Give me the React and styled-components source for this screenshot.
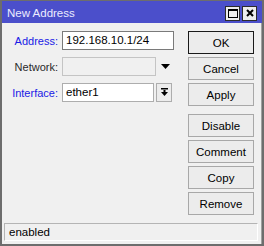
import React from 'react'
import styled, { createGlobalStyle } from 'styled-components'

const Global = createGlobalStyle`
  html, body {
    margin: 0;
    padding: 0;
    background: #f0f0f0;
  }
  * {
    box-sizing: border-box;
  }
`

const fields = [
  { label: 'Address:', value: '192.168.10.1/24', linked: true, kind: 'text' },
  { label: 'Network:', value: '', linked: false, kind: 'disabled' },
  { label: 'Interface:', value: 'ether1', linked: true, kind: 'select' },
]

const mainButtons = ['OK', 'Cancel', 'Apply']
const extraButtons = ['Disable', 'Comment', 'Copy', 'Remove']

const DropArrow = () => (
  <svg width="9" height="5" viewBox="0 0 9 5">
    <polygon points="0,0 9,0 4.5,5" fill="#000" />
  </svg>
)

const BarArrow = () => (
  <svg width="7" height="9" viewBox="0 0 7 9">
    <rect x="0" y="0" width="7" height="1.5" fill="#000" />
    <rect x="2.5" y="2" width="2" height="3" fill="#000" />
    <polygon points="0,4 7,4 3.5,8" fill="#000" />
  </svg>
)

export default function App() {
  return (
    <>
      <Global />
      <Window>
        <TitleBar>
          <Title>New Address</Title>
          <TitleButtons>
            <TitleButton>
              <MaxBox />
            </TitleButton>
            <TitleButton>
              <svg width="8" height="8" viewBox="0 0 8 8">
                <path d="M1 1 L7 7 M7 1 L1 7" stroke="#000" strokeWidth="2" />
              </svg>
            </TitleButton>
          </TitleButtons>
        </TitleBar>
        <Body>
          <Main>
            <Form>
              {fields.map(f => (
                <Row key={f.label}>
                  <Label linked={f.linked}>{f.label}</Label>
                  <Input kind={f.kind}>{f.value}</Input>
                  {f.kind === 'disabled' && (
                    <ArrowSlot>
                      <DropArrow />
                    </ArrowSlot>
                  )}
                  {f.kind === 'select' && (
                    <SelectButton>
                      <BarArrow />
                    </SelectButton>
                  )}
                </Row>
              ))}
            </Form>
            <Buttons>
              <Group>
                {mainButtons.map(b => (
                  <Button key={b} primary={b === 'OK'}>
                    {b}
                  </Button>
                ))}
              </Group>
              <Group>
                {extraButtons.map(b => (
                  <Button key={b}>{b}</Button>
                ))}
              </Group>
            </Buttons>
          </Main>
          <Status>enabled</Status>
        </Body>
      </Window>
    </>
  )
}

const Window = styled.div`
  width: 264px;
  height: 246px;
  display: flex;
  flex-direction: column;
  background: #6d6d6d;
  padding: 1px 2px 2px 2px;
  font-family: 'Liberation Sans', Arial, sans-serif;
  font-size: 11px;
`

const TitleBar = styled.div`
  height: 22px;
  flex: none;
  display: flex;
  align-items: center;
  justify-content: space-between;
  background: #4b4fcb;
  padding: 0 5px 0 5px;
`

const Title = styled.div`
  color: #ececff;
  font-size: 11.5px;
  margin-top: 1px;
`

const TitleButtons = styled.div`
  display: flex;
  gap: 2px;
  margin-top: 2px;
`

const TitleButton = styled.div`
  width: 15px;
  height: 15px;
  display: flex;
  align-items: center;
  justify-content: center;
  background: #ededed;
  border: 1px solid #2c2c2c;
`

const MaxBox = styled.div`
  width: 10px;
  height: 9px;
  border: 1px solid #000;
  border-top-width: 2px;
`

const Body = styled.div`
  flex: 1;
  display: flex;
  flex-direction: column;
  background: #f0f0f0;
  border-right: 1px solid #a0a0a0;
  padding: 8px 3px 3px 0;
`

const Main = styled.div`
  flex: 1;
  display: flex;
  justify-content: space-between;
  padding-right: 4px;
`

const Form = styled.div`
  display: flex;
  flex-direction: column;
  gap: 7px;
`

const Row = styled.div`
  display: flex;
  align-items: center;
  height: 19px;
`

const Label = styled.div`
  width: 56px;
  text-align: right;
  margin-right: 4px;
  color: ${p => (p.linked ? '#1a1ae6' : '#2a2a2a')};
`

const Input = styled.div`
  height: 19px;
  width: ${p => (p.kind === 'text' ? 112 : p.kind === 'disabled' ? 94 : 92)}px;
  padding: 2px 3px;
  line-height: 13px;
  color: #000;
  background: ${p => (p.kind === 'disabled' ? '#f0f0f0' : '#fff')};
  border: 1px solid ${p => (p.kind === 'text' ? '#7a7a7a' : p.kind === 'disabled' ? '#c4c4c4' : '#adadad')};
  font-size: 11.5px;
`

const ArrowSlot = styled.div`
  display: flex;
  margin-left: 5px;
`

const SelectButton = styled.div`
  width: 16px;
  height: 19px;
  margin-left: 2px;
  display: flex;
  align-items: center;
  justify-content: center;
  background: #ececec;
  border: 1px solid #adadad;
`

const Buttons = styled.div`
  display: flex;
  flex-direction: column;
  gap: 8px;
`

const Group = styled.div`
  display: flex;
  flex-direction: column;
  gap: 3px;
`

const Button = styled.div`
  width: 66px;
  height: 23px;
  display: flex;
  align-items: center;
  justify-content: center;
  background: #ececec;
  border: 1px solid ${p => (p.primary ? '#1a1a1a' : '#a8a8a8')};
  color: #000;
  font-size: 11.5px;
`

const Status = styled.div`
  height: 18px;
  margin-top: 8px;
  padding: 0 4px;
  margin-left: 2px;
  display: flex;
  align-items: center;
  border: 1px solid #b4b4b4;
  border-bottom-color: #fff;
  border-right-color: #fff;
  color: #000;
  font-size: 11.5px;
`
